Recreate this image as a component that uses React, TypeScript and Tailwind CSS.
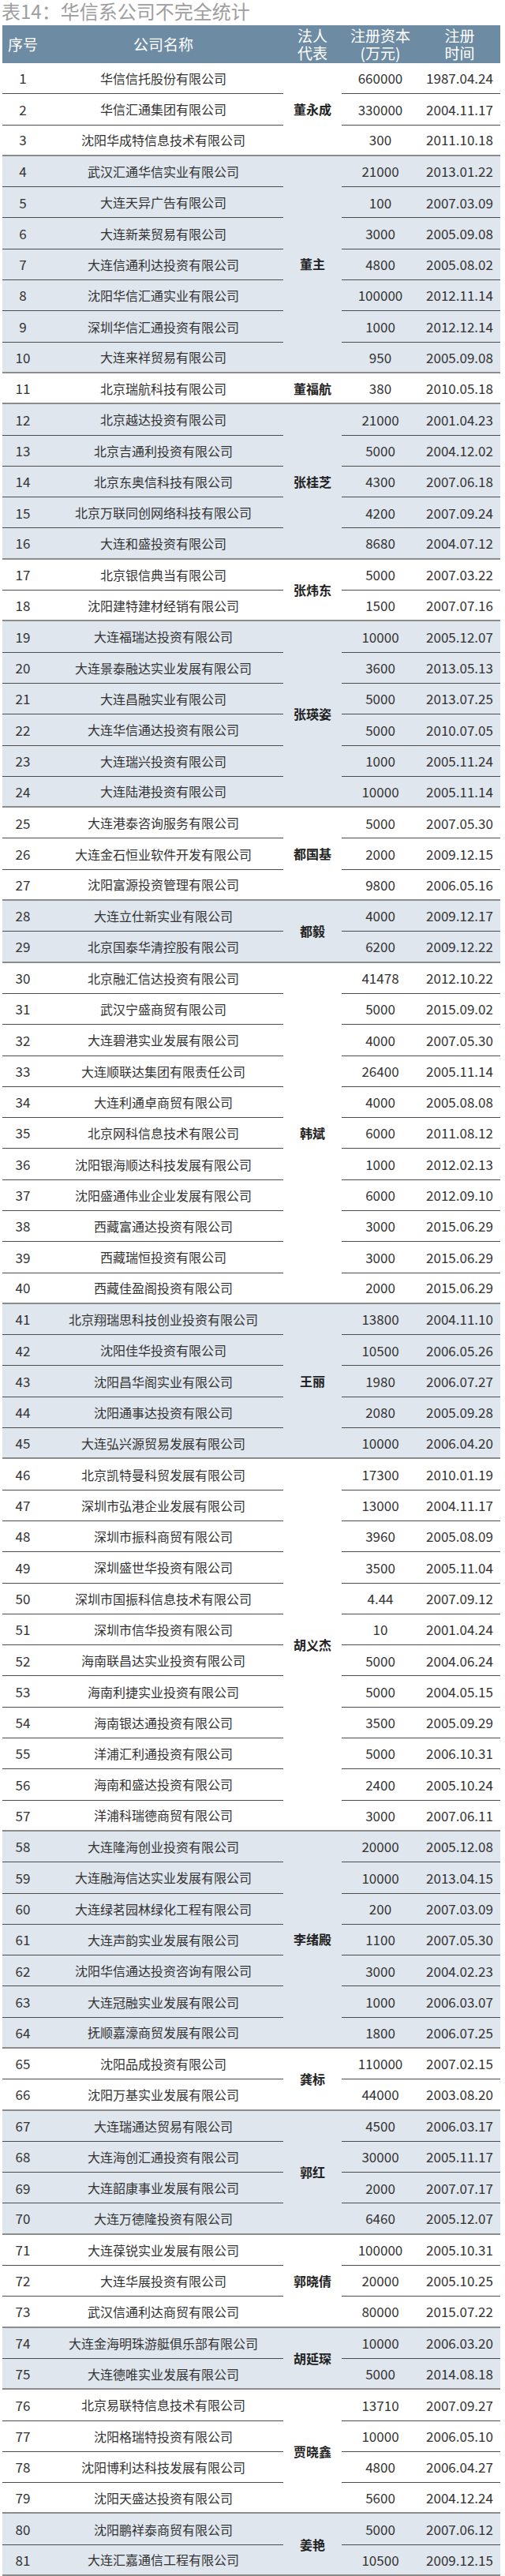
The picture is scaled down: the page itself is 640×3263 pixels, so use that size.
import React from 'react';

type Row = [string, string, string];

const groups: { rep: string; rows: Row[] }[] = [
  {
    rep: '董永成',
    rows: [
      ['华信信托股份有限公司', '660000', '1987.04.24'],
      ['华信汇通集团有限公司', '330000', '2004.11.17'],
      ['沈阳华成特信息技术有限公司', '300', '2011.10.18'],
    ],
  },
  {
    rep: '董主',
    rows: [
      ['武汉汇通华信实业有限公司', '21000', '2013.01.22'],
      ['大连天异广告有限公司', '100', '2007.03.09'],
      ['大连新莱贸易有限公司', '3000', '2005.09.08'],
      ['大连信通利达投资有限公司', '4800', '2005.08.02'],
      ['沈阳华信汇通实业有限公司', '100000', '2012.11.14'],
      ['深圳华信汇通投资有限公司', '1000', '2012.12.14'],
      ['大连来祥贸易有限公司', '950', '2005.09.08'],
    ],
  },
  { rep: '董福航', rows: [['北京瑞航科技有限公司', '380', '2010.05.18']] },
  {
    rep: '张桂芝',
    rows: [
      ['北京越达投资有限公司', '21000', '2001.04.23'],
      ['北京吉通利投资有限公司', '5000', '2004.12.02'],
      ['北京东奥信科技有限公司', '4300', '2007.06.18'],
      ['北京万联同创网络科技有限公司', '4200', '2007.09.24'],
      ['大连和盛投资有限公司', '8680', '2004.07.12'],
    ],
  },
  {
    rep: '张炜东',
    rows: [
      ['北京银信典当有限公司', '5000', '2007.03.22'],
      ['沈阳建特建材经销有限公司', '1500', '2007.07.16'],
    ],
  },
  {
    rep: '张瑛姿',
    rows: [
      ['大连福瑞达投资有限公司', '10000', '2005.12.07'],
      ['大连景泰融达实业发展有限公司', '3600', '2013.05.13'],
      ['大连昌融实业有限公司', '5000', '2013.07.25'],
      ['大连华信通达投资有限公司', '5000', '2010.07.05'],
      ['大连瑞兴投资有限公司', '1000', '2005.11.24'],
      ['大连陆港投资有限公司', '10000', '2005.11.14'],
    ],
  },
  {
    rep: '都国基',
    rows: [
      ['大连港泰咨询服务有限公司', '5000', '2007.05.30'],
      ['大连金石恒业软件开发有限公司', '2000', '2009.12.15'],
      ['沈阳富源投资管理有限公司', '9800', '2006.05.16'],
    ],
  },
  {
    rep: '都毅',
    rows: [
      ['大连立仕新实业有限公司', '4000', '2009.12.17'],
      ['北京国泰华清控股有限公司', '6200', '2009.12.22'],
    ],
  },
  {
    rep: '韩斌',
    rows: [
      ['北京融汇信达投资有限公司', '41478', '2012.10.22'],
      ['武汉宁盛商贸有限公司', '5000', '2015.09.02'],
      ['大连碧港实业发展有限公司', '4000', '2007.05.30'],
      ['大连顺联达集团有限责任公司', '26400', '2005.11.14'],
      ['大连利通卓商贸有限公司', '4000', '2005.08.08'],
      ['北京网科信息技术有限公司', '6000', '2011.08.12'],
      ['沈阳银海顺达科技发展有限公司', '1000', '2012.02.13'],
      ['沈阳盛通伟业企业发展有限公司', '6000', '2012.09.10'],
      ['西藏富通达投资有限公司', '3000', '2015.06.29'],
      ['西藏瑞恒投资有限公司', '3000', '2015.06.29'],
      ['西藏佳盈阁投资有限公司', '2000', '2015.06.29'],
    ],
  },
  {
    rep: '王丽',
    rows: [
      ['北京翔瑞思科技创业投资有限公司', '13800', '2004.11.10'],
      ['沈阳佳华投资有限公司', '10500', '2006.05.26'],
      ['沈阳昌华阁实业有限公司', '1980', '2006.07.27'],
      ['沈阳通事达投资有限公司', '2080', '2005.09.28'],
      ['大连弘兴源贸易发展有限公司', '10000', '2006.04.20'],
    ],
  },
  {
    rep: '胡义杰',
    rows: [
      ['北京凯特曼科贸发展有限公司', '17300', '2010.01.19'],
      ['深圳市弘港企业发展有限公司', '13000', '2004.11.17'],
      ['深圳市振科商贸有限公司', '3960', '2005.08.09'],
      ['深圳盛世华投资有限公司', '3500', '2005.11.04'],
      ['深圳市国振科信息技术有限公司', '4.44', '2007.09.12'],
      ['深圳市信华投资有限公司', '10', '2001.04.24'],
      ['海南联昌达实业投资有限公司', '5000', '2004.06.24'],
      ['海南利捷实业投资有限公司', '5000', '2004.05.15'],
      ['海南银达通投资有限公司', '3500', '2005.09.29'],
      ['洋浦汇利通投资有限公司', '5000', '2006.10.31'],
      ['海南和盛达投资有限公司', '2400', '2005.10.24'],
      ['洋浦科瑞德商贸有限公司', '3000', '2007.06.11'],
    ],
  },
  {
    rep: '李绪殿',
    rows: [
      ['大连隆海创业投资有限公司', '20000', '2005.12.08'],
      ['大连融海信达实业发展有限公司', '10000', '2013.04.15'],
      ['大连绿茗园林绿化工程有限公司', '200', '2007.03.09'],
      ['大连声韵实业发展有限公司', '1100', '2007.05.30'],
      ['沈阳华信通达投资咨询有限公司', '3000', '2004.02.23'],
      ['大连冠融实业发展有限公司', '1000', '2006.03.07'],
      ['抚顺嘉濠商贸发展有限公司', '1800', '2006.07.25'],
    ],
  },
  {
    rep: '龚标',
    rows: [
      ['沈阳品成投资有限公司', '110000', '2007.02.15'],
      ['沈阳万基实业发展有限公司', '44000', '2003.08.20'],
    ],
  },
  {
    rep: '郭红',
    rows: [
      ['大连瑞通达贸易有限公司', '4500', '2006.03.17'],
      ['大连海创汇通投资有限公司', '30000', '2005.11.17'],
      ['大连韶康事业发展有限公司', '2000', '2007.07.17'],
      ['大连万德隆投资有限公司', '6460', '2005.12.07'],
    ],
  },
  {
    rep: '郭晓倩',
    rows: [
      ['大连葆锐实业发展有限公司', '100000', '2005.10.31'],
      ['大连华展投资有限公司', '20000', '2005.10.25'],
      ['武汉信通利达商贸有限公司', '80000', '2015.07.22'],
    ],
  },
  {
    rep: '胡延琛',
    rows: [
      ['大连金海明珠游艇俱乐部有限公司', '10000', '2006.03.20'],
      ['大连德唯实业发展有限公司', '5000', '2014.08.18'],
    ],
  },
  {
    rep: '贾晓鑫',
    rows: [
      ['北京易联特信息技术有限公司', '13710', '2007.09.27'],
      ['沈阳格瑞特投资有限公司', '10000', '2006.05.10'],
      ['沈阳博利达科技发展有限公司', '4800', '2006.04.27'],
      ['沈阳天盛达投资有限公司', '5600', '2004.12.24'],
    ],
  },
  {
    rep: '姜艳',
    rows: [
      ['沈阳鹏祥泰商贸有限公司', '5000', '2007.06.12'],
      ['大连汇嘉通信工程有限公司', '10500', '2009.12.15'],
    ],
  },
];

// inner rows get a thin dark rule, the last row of a group the grey group rule
function rowLine(i: number, count: number) {
  return i < count - 1 ? 'border-b border-[#4d4d4d]' : 'border-b-2 border-[#8c8c8c]';
}

export default function App() {
  let n = 0;

  return (
    <div className="w-[640px] bg-white font-['Noto_Sans_CJK_SC','Noto_Sans',sans-serif] text-[#333]">
      <h1 className="h-[32px] pl-[2px] text-[24px] leading-[28px] font-normal text-[#9e9e9e]">
        表14：华信系公司不完全统计
      </h1>

      <div className="ml-[3px] w-[631px]">
        <div className="flex h-[48px] items-center bg-[#6d8ca3] text-[19px] leading-[22px] text-white">
          <div className="w-[52px] text-center">序号</div>
          <div className="w-[304px] text-center">公司名称</div>
          <div className="w-[74px] text-center">法人<br />代表</div>
          <div className="w-[98px] text-center">注册资本<br />(万元)</div>
          <div className="w-[103px] text-center">注册<br />时间</div>
        </div>

        {groups.map(({ rep, rows }, g) => {
          const start = n;
          n += rows.length;
          return (
            <div key={rep} className={`flex text-[16px] ${g % 2 ? 'bg-[#dfe6ee]' : 'bg-white'}`}>
              <div className="w-[356px]">
                {rows.map(([name], i) => (
                  <div key={name} className={`flex h-[39.3px] items-center ${rowLine(i, rows.length)}`}>
                    <div className="w-[52px] text-center text-[17px]">{start + i + 1}</div>
                    <div className="flex-1 text-center whitespace-nowrap">{name}</div>
                  </div>
                ))}
              </div>
              <div className="flex w-[74px] items-center justify-center border-b-2 border-[#8c8c8c] font-bold text-[#222]">
                {rep}
              </div>
              <div className="w-[201px] text-[17px]">
                {rows.map(([name, capital, date], i) => (
                  <div key={name} className={`flex h-[39.3px] items-center ${rowLine(i, rows.length)}`}>
                    <div className="w-[98px] text-center">{capital}</div>
                    <div className="w-[103px] text-center">{date}</div>
                  </div>
                ))}
              </div>
            </div>
          );
        })}
      </div>
    </div>
  );
}
